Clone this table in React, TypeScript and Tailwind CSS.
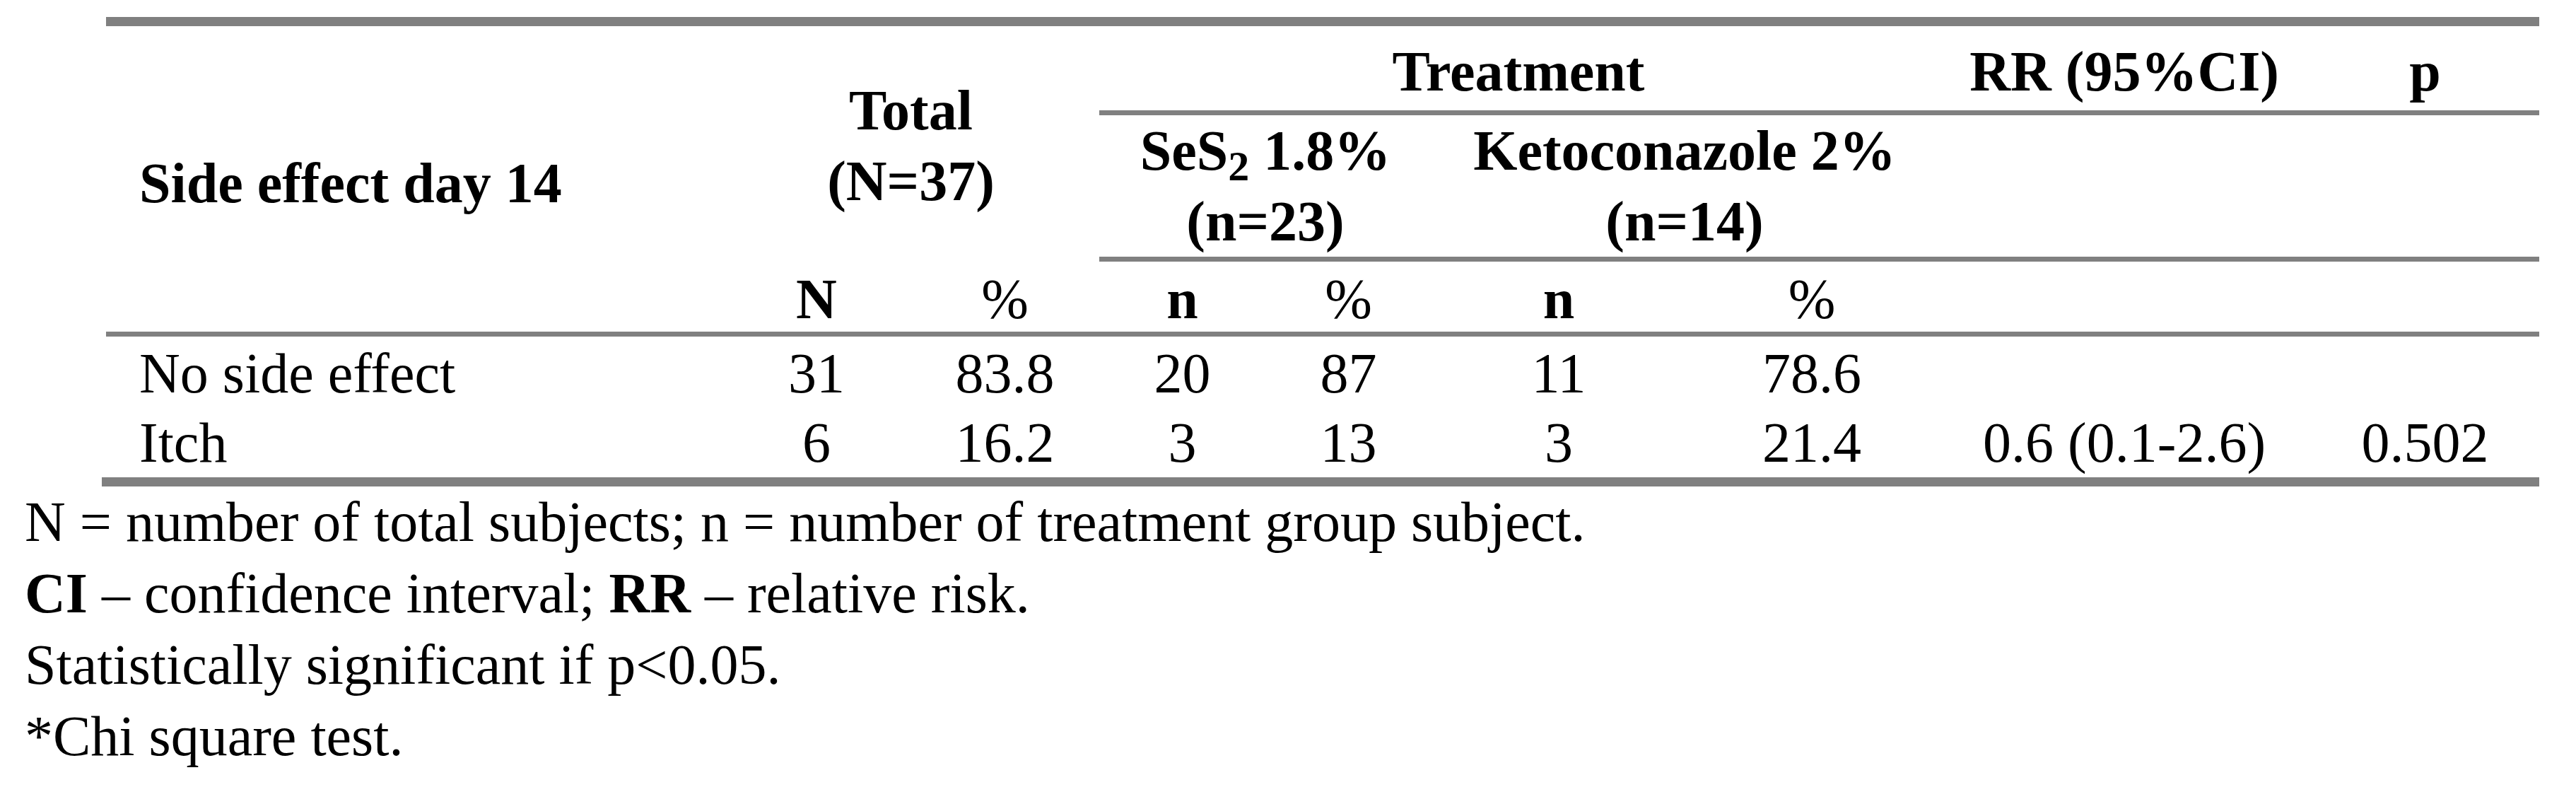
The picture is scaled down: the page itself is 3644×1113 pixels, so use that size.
export default function App() {
  const rule = "border-[#808080]";
  const cell = `border-b-[7px] ${rule}`;

  const rows = [
    { label: "No side effect", vals: ["31", "83.8", "20", "87", "11", "78.6", "", ""] },
    { label: "Itch", vals: ["6", "16.2", "3", "13", "3", "21.4", "0.6 (0.1-2.6)", "0.502"] },
  ];

  return (
    <div className="min-h-screen bg-white pl-[35px] pt-[24px] font-['Liberation_Serif',serif] text-[80px] text-black">
      <div className={`ml-[109px] w-[3448px] border-b-[13px] ${rule}`}>
        <table className={`ml-[6px] w-[3442px] table-fixed border-separate border-spacing-0 border-t-[13px] ${rule}`}>
          <colgroup>
            <col className="w-[872px]" />
            <col className="w-[266px]" />
            <col className="w-[267px]" />
            <col className="w-[235px]" />
            <col className="w-[235px]" />
            <col className="w-[360px]" />
            <col className="w-[356px]" />
            <col className="w-[528px]" />
            <col className="w-[323px]" />
          </colgroup>
          <thead>
            <tr>
              <th rowSpan={3} className={`${cell} pl-[47px] pt-[11px] text-left align-middle font-bold leading-[100px] whitespace-nowrap`}>
                Side effect day 14
              </th>
              <th colSpan={2} rowSpan={2} className="pt-[5px] text-center align-middle font-bold leading-[100px]">
                Total
                <br />
                (N=37)
              </th>
              <th colSpan={4} className={`${cell} pt-[14px] pb-[5px] text-center font-bold leading-[100px]`}>
                Treatment
              </th>
              <th className={`${cell} pt-[14px] pb-[5px] text-center font-bold leading-[100px] whitespace-nowrap`}>
                RR (95%CI)
              </th>
              <th className={`${cell} pt-[14px] pb-[5px] text-center font-bold leading-[100px]`}>p</th>
            </tr>
            <tr>
              <th colSpan={2} className={`${cell} text-center align-top font-bold leading-[100px] whitespace-nowrap`}>
                SeS<sub>2</sub> 1.8%
                <br />
                (n=23)
              </th>
              <th colSpan={2} className={`${cell} text-center align-top font-bold leading-[100px] whitespace-nowrap`}>
                Ketoconazole 2%
                <br />
                (n=14)
              </th>
              <td className={cell} />
              <td className={cell} />
            </tr>
            <tr>
              <th className={`${cell} pt-[7px] text-center font-bold leading-[92px]`}>N</th>
              <th className={`${cell} pt-[7px] text-center font-normal leading-[92px]`}>%</th>
              <th className={`${cell} pt-[7px] text-center font-bold leading-[92px]`}>n</th>
              <th className={`${cell} pt-[7px] text-center font-normal leading-[92px]`}>%</th>
              <th className={`${cell} pt-[7px] text-center font-bold leading-[92px]`}>n</th>
              <th className={`${cell} pt-[7px] text-center font-normal leading-[92px]`}>%</th>
              <td className={cell} />
              <td className={cell} />
            </tr>
          </thead>
          <tbody>
            {rows.map((r, i) => (
              <tr key={r.label} className={i === 0 ? "leading-[100px]" : "leading-[97px]"}>
                <td className={`${i === 0 ? "pt-[2px]" : ""} pl-[47px] text-left whitespace-nowrap`}>{r.label}</td>
                {r.vals.map((v, j) => (
                  <td key={j} className={`${i === 0 ? "pt-[2px]" : ""} text-center whitespace-nowrap`}>
                    {v}
                  </td>
                ))}
              </tr>
            ))}
          </tbody>
        </table>
      </div>

      <div className="leading-[101px] whitespace-nowrap">
        <p>N = number of total subjects; n = number of treatment group subject.</p>
        <p>
          <b className="font-bold">CI</b> – confidence interval; <b className="font-bold">RR</b> – relative risk.
        </p>
        <p>Statistically significant if p&lt;0.05.</p>
        <p>*Chi square test.</p>
      </div>
    </div>
  );
}
